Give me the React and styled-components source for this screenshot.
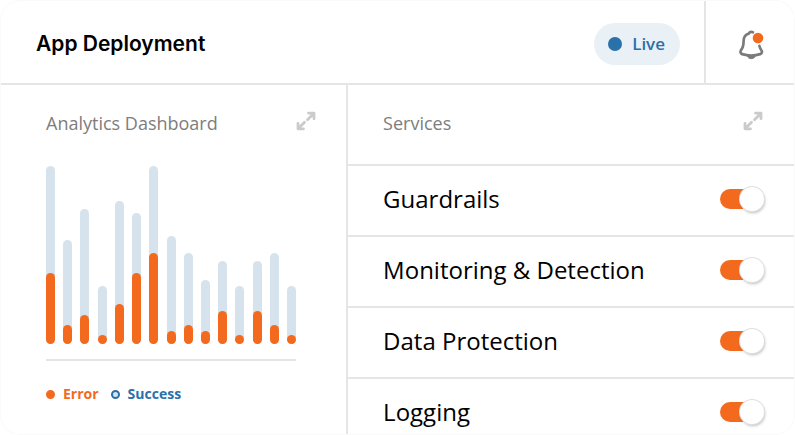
import React from 'react';
import styled, { createGlobalStyle } from 'styled-components';

const colors = {
    orange: '#f36a1f',
    blue: '#2a70aa',
    paleBlue: '#d6e3ed',
    pill: '#e9f0f6',
    line: '#e5e5e5',
    muted: '#7d7d7d',
    icon: '#cbcbcb',
};

const bars = [
    { success: 178, error: 71 },
    { success: 104, error: 19 },
    { success: 135, error: 29 },
    { success: 58, error: 9 },
    { success: 143, error: 40 },
    { success: 131, error: 71 },
    { success: 178, error: 91 },
    { success: 108, error: 13 },
    { success: 91, error: 19 },
    { success: 64, error: 13 },
    { success: 83, error: 33 },
    { success: 58, error: 9 },
    { success: 83, error: 33 },
    { success: 91, error: 19 },
    { success: 58, error: 9 },
];

const services = ['Guardrails', 'Monitoring & Detection', 'Data Protection', 'Logging'];

const ExpandIcon = () => (
    <svg width="20" height="20" viewBox="0 0 20 20" fill="none" stroke="currentColor" strokeWidth="2.8" strokeLinecap="round" strokeLinejoin="round" aria-hidden="true">
        <path d="M12.500 2.200h5.500v5.500M17.500 2.700l-6 6M7.500 17.800H2v-5.500M2.500 17.300l6-6" />
    </svg>
);

const BellIcon = () => (
    <svg width="30" height="32" viewBox="-2 0 30 32" fill="none" aria-hidden="true">
        <path d="M16 3.300c-1.600-.6-3.400-.3-4.200 1.300C8.500 5.800 6.600 8.600 6.600 12c0 4.600-.8 7-2.600 9.200-1 1.300-.6 3.300 1.200 3.900 5.500 1.700 12.700 1.700 18 0 1.800-.6 2.200-2.600 1.200-3.900-1-1.400-1.600-2.700-2-4.200" stroke="#7b7b7b" strokeWidth="2.7" strokeLinecap="round" strokeLinejoin="round" />
        <path d="M10 26.500c1.200 4.200 7.400 4.200 8.600 0z" fill="#7b7b7b" stroke="#7b7b7b" strokeLinejoin="round" />
        <circle cx="21" cy="9" r="5.300" fill={colors.orange} />
    </svg>
);

const App = () => (
    <>
        <GlobalStyle />
        <Card>
            <Header>
                <HeaderMain>
                    <Title>App Deployment</Title>
                    <Status>Live</Status>
                </HeaderMain>
                <BellButton type="button" aria-label="Notifications">
                    <BellIcon />
                </BellButton>
            </Header>
            <Body>
                <Analytics>
                    <PanelHead>
                        <PanelTitle>Analytics Dashboard</PanelTitle>
                        <IconButton type="button" aria-label="Expand analytics">
                            <ExpandIcon />
                        </IconButton>
                    </PanelHead>
                    <Chart>
                        {bars.map((bar, i) => (
                            <Bar key={i} style={{ height: bar.success }}>
                                <ErrorBar style={{ height: bar.error }} />
                            </Bar>
                        ))}
                    </Chart>
                    <Legend>
                        <LegendItem $color={colors.orange} $fill={colors.orange}>Error</LegendItem>
                        <LegendItem $color={colors.blue} $fill={colors.paleBlue}>Success</LegendItem>
                    </Legend>
                </Analytics>
                <Services>
                    <ServicesHead>
                        <PanelTitle>Services</PanelTitle>
                        <IconButton type="button" aria-label="Expand services">
                            <ExpandIcon />
                        </IconButton>
                    </ServicesHead>
                    {services.map((name) => (
                        <ServiceRow key={name}>
                            {name}
                            <Toggle type="checkbox" role="switch" defaultChecked />
                        </ServiceRow>
                    ))}
                </Services>
            </Body>
        </Card>
    </>
);

const GlobalStyle = createGlobalStyle`
    *, *::before, *::after {
        box-sizing: border-box;
    }
    body {
        margin: 0;
        background: white;
        color: black;
        font-family: 'Open Sans', 'Liberation Sans', sans-serif;
    }
    button {
        display: flex;
        align-items: center;
        justify-content: center;
        padding: 0;
        border: 0;
        background: none;
        cursor: pointer;
    }
`;

const Card = styled.main`
    display: flex;
    flex-direction: column;
    height: 100vh;
    overflow: hidden;
    border: 1px solid #fafafa;
    border-radius: 20px;
    background: white;
`;

const Header = styled.header`
    display: flex;
    flex: none;
    border-bottom: 2px solid ${colors.line};
`;

const HeaderMain = styled.div`
    display: flex;
    flex: 1;
    align-items: center;
    justify-content: space-between;
    padding: 4px 24px 0 35px;
`;

const Title = styled.h1`
    margin: 0;
    font-family: 'Inter', sans-serif;
    font-size: 21px;
    line-height: 28px;
    font-weight: 600;
`;

const Status = styled.span`
    display: flex;
    align-items: center;
    gap: 10px;
    padding: 9px 15px 9px 14px;
    border-radius: 21px;
    background: ${colors.pill};
    color: ${colors.blue};
    font-size: 17px;
    line-height: 24px;
    font-weight: 600;

    &::before {
        content: '';
        width: 14px;
        height: 14px;
        border-radius: 50%;
        background: ${colors.blue};
    }
`;

const BellButton = styled.button`
    && {
        width: 90px;
        height: 82px;
        padding-top: 5px;
        border-left: 2px solid ${colors.line};
    }
`;

const Body = styled.div`
    display: grid;
    grid-template-columns: 348fr 447fr;
    flex: 1;
    min-height: 0;
`;

const Analytics = styled.section`
    padding: 0 30px 0 45px;
    border-right: 2px solid ${colors.line};
`;

const PanelHead = styled.div`
    display: flex;
    align-items: flex-start;
    justify-content: space-between;
    height: 79px;
    padding-top: 26px;
`;

const PanelTitle = styled.h2`
    margin: 0;
    color: ${colors.muted};
    font-size: 18px;
    line-height: 24px;
    font-weight: 400;
`;

const IconButton = styled.button`
    color: ${colors.icon};
`;

const Chart = styled.div`
    display: flex;
    align-items: flex-end;
    justify-content: space-between;
    height: 197px;
    margin-right: 20px;
    padding-bottom: 15px;
    border-bottom: 2px solid ${colors.line};
`;

const Bar = styled.div`
    display: flex;
    align-items: flex-end;
    width: 9px;
    border-radius: 5px;
    background: ${colors.paleBlue};
`;

const ErrorBar = styled.div`
    width: 100%;
    border-radius: 5px;
    background: ${colors.orange};
`;

const Legend = styled.div`
    display: flex;
    gap: 12px;
    padding-top: 23px;
`;

const LegendItem = styled.span`
    display: flex;
    align-items: center;
    gap: 8px;
    color: ${({ $color }) => $color};
    font-size: 14px;
    line-height: 20px;
    font-weight: 700;

    &::before {
        content: '';
        width: 9px;
        height: 9px;
        border: 2px solid ${({ $color }) => $color};
        border-radius: 50%;
        background: ${({ $fill }) => $fill};
    }
`;

const Services = styled.section`
    min-width: 0;
    overflow: hidden;
`;

const ServicesHead = styled(PanelHead)`
    padding: 26px 31px 0 35px;
`;

const ServiceRow = styled.label`
    display: flex;
    align-items: center;
    justify-content: space-between;
    height: 71px;
    padding: 0 30px 4px 35px;
    border-top: 2px solid ${colors.line};
    font-size: 24px;
    line-height: 32px;
`;

const Toggle = styled.input`
    appearance: none;
    display: flex;
    align-items: center;
    justify-content: flex-end;
    width: 44px;
    height: 20px;
    margin: 0;
    border-radius: 10px;
    background: #c9c9c9;
    cursor: pointer;

    &:not(:checked) {
        justify-content: flex-start;
    }

    &:checked {
        background: ${colors.orange};
    }

    &::before {
        content: '';
        flex: none;
        width: 24px;
        height: 24px;
        border-radius: 50%;
        background: white;
        box-shadow: 0 0 0 1px #e0e0e0, 1px 2px 3px rgba(0, 0, 0, 0.25);
    }
`;

export default App;
